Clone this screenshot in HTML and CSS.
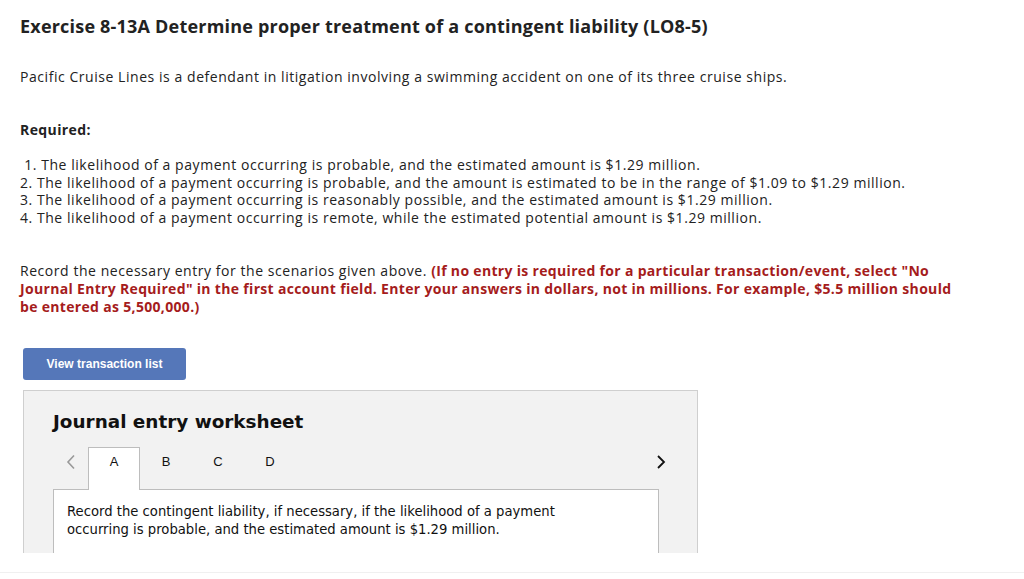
FILE: index.html
```html
<!DOCTYPE html>
<html>
<head>
<meta charset="utf-8">
<link rel="stylesheet" href="styles.css">
</head>
<body>
<div class="page">
  <div class="content">
    <h1 class="title">Exercise 8-13A Determine proper treatment of a contingent liability (LO8-5)</h1>
    <p class="intro">Pacific Cruise Lines is a defendant in litigation involving a swimming accident on one of its three cruise ships.</p>
    <p class="req">Required:</p>
    <ol class="list">
      <li>&nbsp;1. The likelihood of a payment occurring is probable, and the estimated amount is $1.29 million.</li>
      <li>2. The likelihood of a payment occurring is probable, and the amount is estimated to be in the range of $1.09 to $1.29 million.</li>
      <li>3. The likelihood of a payment occurring is reasonably possible, and the estimated amount is $1.29 million.</li>
      <li>4. The likelihood of a payment occurring is remote, while the estimated potential amount is $1.29 million.</li>
    </ol>
    <p class="record">Record the necessary entry for the scenarios given above. <span class="red">(If no entry is required for a particular transaction/event, select "No<br>Journal Entry Required" in the first account field. Enter your answers in dollars, not in millions. For example, $5.5 million should<br>be entered as 5,500,000.)</span></p>
    <button class="btn">View transaction list</button>
    <div class="sheet">
      <h2 class="sheet-title">Journal entry worksheet</h2>
      <div class="tabs">
        <span class="chev chev-left"><svg width="12" height="16" viewBox="0 0 12 16"><path d="M9 1.5 L3 8 L9 14.5" fill="none" stroke="#999" stroke-width="1.6"/></svg></span>
        <span class="tab active">A</span>
        <span class="tab">B</span>
        <span class="tab">C</span>
        <span class="tab">D</span>
        <span class="spacer"></span>
        <span class="chev chev-right"><svg width="12" height="16" viewBox="0 0 12 16"><path d="M3 2 L9 8 L3 14" fill="none" stroke="#111" stroke-width="1.8"/></svg></span>
      </div>
      <div class="panel">
        <p class="panel-text">Record the contingent liability, if necessary, if the likelihood of a payment<br>occurring is probable, and the estimated amount is $1.29 million.</p>
      </div>
    </div>
  </div>
  <div class="footer"></div>
</div>
</body>
</html>
```
FILE: styles.css
```css
html, body {
  margin: 0;
  padding: 0;
  background: #fff;
}
.page {
  width: 1024px;
  height: 579px;
  overflow: hidden;
}
.content {
  height: 553px;
  overflow: hidden;
  padding-left: 20px;
  box-sizing: border-box;
  font-family: "Open Sans", "Liberation Sans", sans-serif;
  color: #222;
}
.title {
  margin: 0;
  padding-top: 15px;
  font-size: 18px;
  line-height: 22px;
  font-weight: 700;
  letter-spacing: 0.2px;
  color: #222;
}
.intro {
  margin: 31px 0 0;
  font-size: 14px;
  line-height: 18px;
  letter-spacing: 0.55px;
}
.req {
  margin: 35px 0 0;
  font-size: 14px;
  line-height: 18px;
  font-weight: 700;
  letter-spacing: 0.4px;
}
.list {
  list-style: none;
  margin: 17px 0 0;
  padding: 0;
  font-size: 14px;
  line-height: 17.7px;
  letter-spacing: 0.55px;
}
.record {
  margin: 35px 0 0;
  font-size: 14px;
  line-height: 18px;
  letter-spacing: 0.55px;
  width: 1000px;
}
.red {
  color: #a51c1c;
  font-weight: 700;
  letter-spacing: 0.32px;
}
.btn {
  display: block;
  margin: 32px 0 0 3px;
  width: 163px;
  height: 32px;
  border: none;
  border-radius: 3px;
  background: #5577b9;
  color: #fff;
  font-family: "Liberation Sans", Arial, sans-serif;
  font-weight: 700;
  font-size: 12px;
  padding: 0;
}
.sheet {
  margin: 10px 0 0 3px;
  width: 675px;
  height: 200px;
  box-sizing: border-box;
  background: #f2f2f2;
  border: 1px solid #cfcfcf;
  padding: 0 0 0 29px;
  font-family: "DejaVu Sans", Verdana, sans-serif;
}
.sheet-title {
  margin: 20px 0 0;
  font-size: 18.4px;
  line-height: 22px;
  font-weight: 700;
  color: #111;
}
.tabs {
  display: flex;
  align-items: stretch;
  margin-top: 14px;
  height: 42px;
  width: 614px;
  font-family: "Liberation Sans", Arial, sans-serif;
  font-size: 13px;
  line-height: 16px;
  color: #111;
}
.chev {
  display: flex;
  align-items: flex-start;
  justify-content: center;
  padding-top: 7px;
}
.chev-left {
  width: 35px;
}
.chev-right {
  width: 12px;
}
.spacer {
  flex: 1;
}
.tab {
  width: 52px;
  display: flex;
  align-items: flex-start;
  justify-content: center;
  box-sizing: border-box;
  padding-top: 7px;
}
.tab.active {
  background: #fff;
  border: 1px solid #bdbdbd;
  border-bottom: none;
  position: relative;
  z-index: 1;
  margin-bottom: -1px;
  padding-top: 6px;
}
.panel {
  width: 606px;
  height: 100px;
  box-sizing: border-box;
  background: #fff;
  border: 1px solid #bdbdbd;
  padding: 13px 0 0 13px;
}
.panel-text {
  margin: 0;
  font-size: 13.2px;
  line-height: 18px;
  color: #111;
}
.footer {
  height: 26px;
}
.footer::after {
  content: "";
  display: block;
  margin-top: 19px;
  height: 1px;
  background: #f0f0f0;
}
```
